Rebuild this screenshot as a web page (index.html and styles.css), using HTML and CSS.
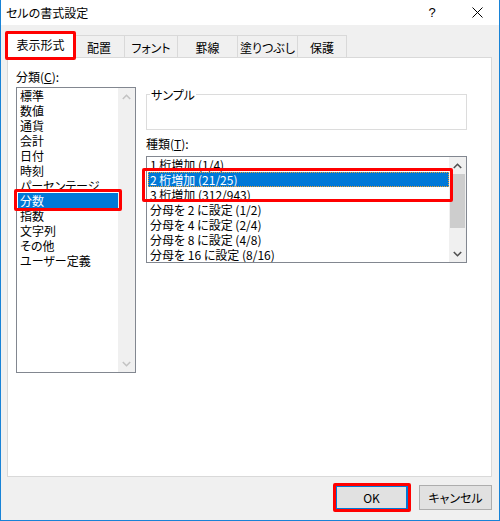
FILE: index.html
```html
<!DOCTYPE html>
<html lang="ja">
<head>
<meta charset="utf-8">
<title>セルの書式設定</title>
<link rel="stylesheet" href="styles.css">
</head>
<body>
<div class="window">
  <div class="titlebar">
    <span class="title">セルの書式設定</span>
    <span class="help">?</span>
    <span class="close"><svg width="11" height="11" viewBox="0 0 11 11"><path d="M0.5 0.5 L10.5 10.5 M10.5 0.5 L0.5 10.5" stroke="#000" stroke-width="1" fill="none"/></svg></span>
  </div>
  <div class="main">
    <div class="tabs">
      <div class="tab selected annot-tab">表示形式</div>
      <div class="tab w51">配置</div>
      <div class="tab w53">フォント</div>
      <div class="tab w60">罫線</div>
      <div class="tab w60">塗りつぶし</div>
      <div class="tab w50 last">保護</div>
    </div>
    <div class="panel">
      <div class="col-left">
        <div class="label">分類(<u>C</u>):</div>
        <div class="listbox cat">
          <div class="items">
            <div class="item">標準</div>
            <div class="item">数値</div>
            <div class="item">通貨</div>
            <div class="item">会計</div>
            <div class="item">日付</div>
            <div class="item">時刻</div>
            <div class="item">パーセンテージ</div>
            <div class="item sel annot-cat">分数</div>
            <div class="item">指数</div>
            <div class="item">文字列</div>
            <div class="item">その他</div>
            <div class="item">ユーザー定義</div>
          </div>
          <div class="scrollbar">
            <div class="arrow"><svg width="9" height="6" viewBox="0 0 9 6"><polyline points="0.8,5 4.5,1.3 8.2,5" fill="none" stroke="#c3c3c3" stroke-width="1.6"/></svg></div>
            <div class="track"></div>
            <div class="arrow"><svg width="9" height="6" viewBox="0 0 9 6"><polyline points="0.8,1 4.5,4.7 8.2,1" fill="none" stroke="#c3c3c3" stroke-width="1.6"/></svg></div>
          </div>
        </div>
      </div>
      <div class="col-right">
        <div class="sample"><span class="sample-label">サンプル</span></div>
        <div class="label type-label">種類(<u>T</u>):</div>
        <div class="listbox type">
          <div class="items">
            <div class="item">1 桁増加 (1/4)</div>
            <div class="annot-type">
              <div class="item sel focus">2 桁増加 (21/25)</div>
              <div class="item">3 桁増加 (312/943)</div>
            </div>
            <div class="item">分母を 2 に設定 (1/2)</div>
            <div class="item">分母を 4 に設定 (2/4)</div>
            <div class="item">分母を 8 に設定 (4/8)</div>
            <div class="item">分母を 16 に設定 (8/16)</div>
          </div>
          <div class="scrollbar">
            <div class="arrow"><svg width="9" height="6" viewBox="0 0 9 6"><polyline points="0.8,5 4.5,1.3 8.2,5" fill="none" stroke="#505050" stroke-width="1.6"/></svg></div>
            <div class="thumb"></div>
            <div class="track"></div>
            <div class="arrow"><svg width="9" height="6" viewBox="0 0 9 6"><polyline points="0.8,1 4.5,4.7 8.2,1" fill="none" stroke="#505050" stroke-width="1.6"/></svg></div>
          </div>
        </div>
      </div>
    </div>
    <div class="buttons">
      <div class="btn default annot-ok">OK</div>
      <div class="btn">キャンセル</div>
    </div>
  </div>
</div>
</body>
</html>
```
FILE: styles.css
```css
* { box-sizing: border-box; }
body {
  margin: 0;
  font-family: "Noto Sans CJK JP", "Noto Sans", sans-serif;
  font-size: 12px;
  color: #000;
  font-feature-settings: "palt";
}
u { text-decoration: underline; text-underline-offset: 1px; }
.window {
  width: 500px;
  height: 521px;
  border: 1px solid #1883d7;
  border-top: 0;
  background: #f0f0f0;
  display: flex;
  flex-direction: column;
}
.titlebar {
  height: 25px;
  background: #fff;
  display: flex;
  align-items: center;
  padding-left: 5px;
  flex: none;
}
.title { flex: 1; line-height: 15px; }
.help {
  width: 46px;
  text-align: center;
  font-family: "Liberation Sans", sans-serif;
  font-size: 13px;
}
.close {
  width: 44px;
  height: 25px;
  display: flex;
  align-items: center;
  justify-content: center;
}
.close svg { display: block; margin-top: -1px; }
.main {
  padding: 0 7px 0 6px;
  display: flex;
  flex-direction: column;
}
.tabs {
  margin-top: 6px;
  height: 26px;
  display: flex;
  align-items: flex-end;
  position: relative;
  z-index: 2;
}
.tab {
  height: 22px;
  border: 1px solid #d9d9d9;
  border-right: 0;
  border-bottom: 0;
  background: #f0f0f0;
  display: flex;
  align-items: center;
  justify-content: center;
  line-height: 15px;
  padding-top: 1px;
}
.tab.last { border-right: 1px solid #d9d9d9; }
.tab.selected {
  width: 66px;
  height: 27px;
  margin-bottom: -1px;
  background: #fff;
  padding-top: 0;
  padding-bottom: 2px;
}
.w50 { width: 50px; }
.w51 { width: 51px; }
.w53 { width: 53px; }
.w60 { width: 60px; }
.panel {
  height: 420px;
  background: #fff;
  border: 1px solid #d9d9d9;
  padding: 11px 0 0 8px;
  display: flex;
  gap: 10px;
}
.label { height: 15px; line-height: 15px; }
.col-left { width: 120px; display: flex; flex-direction: column; }
.col-left .listbox { margin-top: 3px; height: 286px; }
.col-right { width: 321px; display: flex; flex-direction: column; }
.listbox {
  border: 1px solid #828790;
  background: #fff;
  display: flex;
}
.items { flex: 1; }
.item {
  height: 15px;
  line-height: 15px;
  padding-left: 2px;
  margin-left: 1px;
  white-space: nowrap;
}
.item.sel { background: #0078d7; color: #fff; }
.item.focus { outline: 1px dotted #f0a030; outline-offset: -1px; }
.scrollbar {
  width: 17px;
  background: #f0f0f0;
  display: flex;
  flex-direction: column;
}
.arrow {
  height: 17px;
  display: flex;
  align-items: center;
  justify-content: center;
  flex: none;
}
.arrow svg { display: block; }
.track { flex: 1; }
.thumb {
  height: 54px;
  margin: 0 1px;
  background: #cdcdcd;
  flex: none;
}
.sample {
  margin-top: 25px;
  height: 36px;
  border: 1px solid #dcdcdc;
  position: relative;
}
.sample-label {
  position: absolute;
  left: 3px;
  top: -8px;
  line-height: 15px;
  padding: 0 1px;
  background: #fff;
}
.type-label { margin-top: 6px; }
.col-right .listbox { margin-top: 5px; height: 107px; }
.buttons {
  margin-top: 8px;
  display: flex;
  justify-content: flex-end;
  gap: 11px;
}
.btn {
  width: 73px;
  height: 25px;
  border: 1px solid #adadad;
  background: #e1e1e1;
  display: flex;
  align-items: center;
  justify-content: center;
  line-height: 15px;
}
.btn.default {
  border-color: #0078d7;
  box-shadow: inset 0 0 0 1px #0078d7;
}
/* red annotation frames */
.annot-tab, .annot-cat, .annot-type, .annot-ok { position: relative; }
.annot-tab::after, .annot-cat::after, .annot-type::after, .annot-ok::after {
  content: "";
  position: absolute;
  border: 3px solid #ff0000;
  border-radius: 2px;
  pointer-events: none;
}
.annot-tab::after { left: -3px; right: -3px; top: -1px; bottom: -2px; }
.annot-cat::after { left: -4px; right: -4px; top: -4px; bottom: -3px; }
.annot-type::after { left: -5px; right: -4px; top: -4px; bottom: 0; }
.annot-ok::after { left: -3px; right: -4px; top: -3px; bottom: -3px; }
```
